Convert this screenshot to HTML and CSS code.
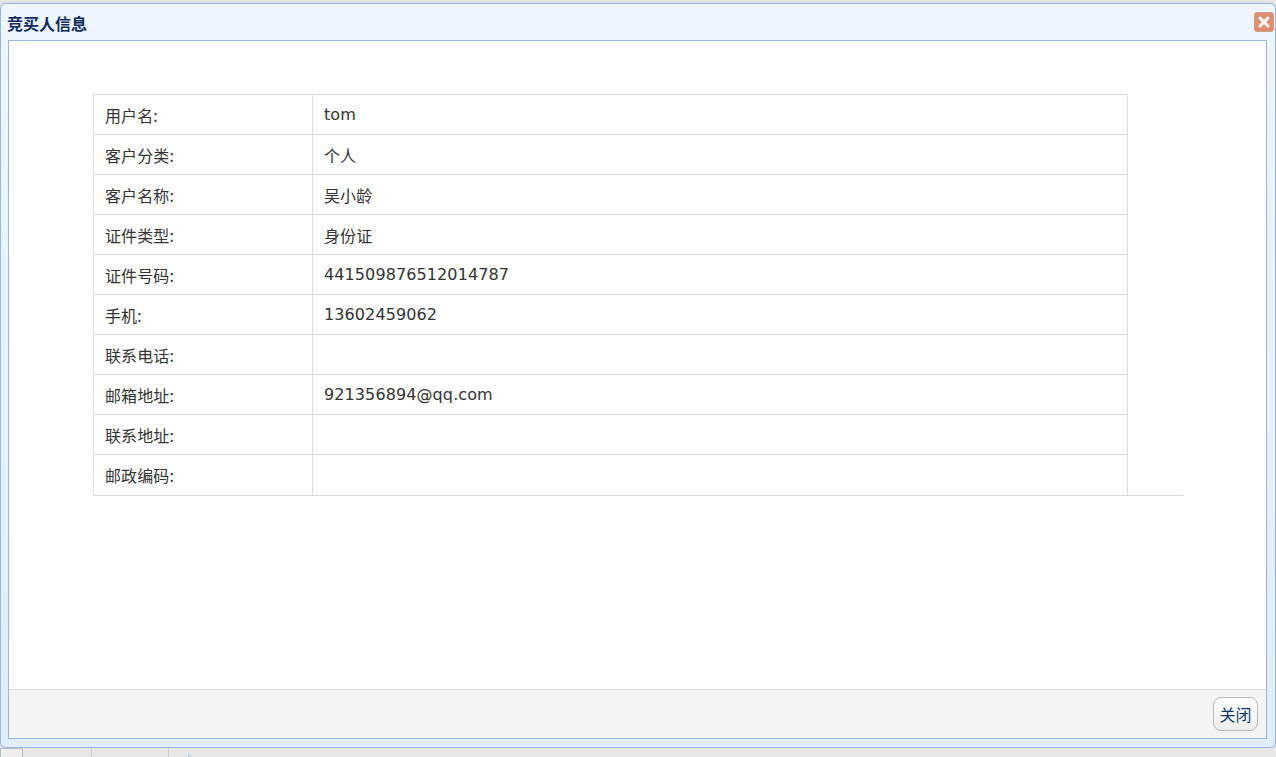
FILE: index.html
```html
<!DOCTYPE html>
<html>
<head>
<meta charset="utf-8">
<title>竞买人信息</title>
<link rel="stylesheet" href="styles.css">
</head>
<body>
<div class="window">
  <div class="window-title">
    <span class="title-text">竞买人信息</span>
    <span class="close-icon">
      <svg width="12" height="12" viewBox="0 0 12 12"><path d="M2 2 L10 10 M10 2 L2 10" stroke="#fff" stroke-width="3" stroke-linecap="round"/></svg>
    </span>
  </div>
  <div class="window-body">
    <div class="content">
      <div class="table-wrap">
        <table class="info">
          <tr><td class="label">用户名:</td><td>tom</td></tr>
          <tr><td class="label">客户分类:</td><td>个人</td></tr>
          <tr><td class="label">客户名称:</td><td>吴小龄</td></tr>
          <tr><td class="label">证件类型:</td><td>身份证</td></tr>
          <tr><td class="label">证件号码:</td><td>441509876512014787</td></tr>
          <tr><td class="label">手机:</td><td>13602459062</td></tr>
          <tr><td class="label">联系电话:</td><td></td></tr>
          <tr><td class="label">邮箱地址:</td><td>921356894@qq.com</td></tr>
          <tr><td class="label">联系地址:</td><td></td></tr>
          <tr><td class="label">邮政编码:</td><td></td></tr>
        </table>
      </div>
    </div>
    <div class="buttons">
      <button class="btn">关闭</button>
    </div>
  </div>
</div>
<div class="under">
  <span class="under-tab first"></span>
  <span class="under-tab"></span>
  <span class="under-tab last"><i class="arrow"></i></span>
</div>
</body>
</html>
```

FILE: styles.css
```css
html, body {
  height: 100%;
}

body {
  margin: 0;
  padding-top: 3px;
  box-sizing: border-box;
  overflow: hidden;
  background: #e6e6e6;
  font-family: "DejaVu Sans", "Noto Sans CJK SC", sans-serif;
  font-size: 16px;
  color: #333;
  display: flex;
  flex-direction: column;
}

.window {
  height: 745px;
  margin-right: 0;
  box-sizing: border-box;
  padding: 0 8px 8px 7px;
  border: 1px solid #95b8e7;
  border-radius: 6px;
  background: linear-gradient(to bottom, #eff5ff 0, #e0ecff 100%);
  display: flex;
  flex-direction: column;
  box-shadow: 0 0 2px #bbb;
}

.window-title {
  height: 36px;
  flex: none;
  display: flex;
  align-items: center;
  justify-content: space-between;
  margin-left: -1px;
  margin-right: -7px;
}

.title-text {
  font-family: "Noto Sans CJK SC", sans-serif;
  font-size: 16px;
  font-weight: bold;
  color: #0e2d5f;
  position: relative;
  top: 1px;
}

.close-icon {
  width: 20px;
  height: 20px;
  margin-top: 0;
  border-radius: 3px;
  background: #e08d6f;
  border: 1px solid #cf9c88;
  box-sizing: border-box;
  display: flex;
  align-items: center;
  justify-content: center;
}

.window-body {
  flex: 1;
  display: flex;
  flex-direction: column;
  border: 1px solid #95b8e7;
  background: #fff;
}

.content {
  flex: 1;
  padding: 53px 0 0 84px;
}

.table-wrap {
  width: 1090px;
  border-bottom: 1px solid #ddd;
}

.info {
  width: 1035px;
  border-collapse: collapse;
  table-layout: fixed;
}

.info td {
  height: 40px;
  box-sizing: border-box;
  padding: 0 11px;
  border: 1px solid #ddd;
  letter-spacing: 0.1px;
}

.info tr:last-child td {
  border-bottom: 0;
}

.info .label {
  width: 219px;
  font-family: "Noto Sans CJK SC", sans-serif;
}

.buttons {
  height: 49px;
  box-sizing: border-box;
  flex: none;
  border-top: 1px solid #ddd;
  background: #f4f4f4;
  display: flex;
  align-items: center;
  justify-content: flex-end;
  padding: 0 8px 0 0;
}

.btn {
  width: 45px;
  height: 34px;
  padding: 0;
  border: 1px solid #bbb;
  border-radius: 8px;
  background: linear-gradient(to bottom, #fff 0, #eee 100%);
  color: #0e3a6e;
  font-family: "Noto Sans CJK SC", sans-serif;
  font-size: 16px;
}

.under {
  flex: 1;
  display: flex;
  background: #e6e6e6;
}

.under-tab {
  width: 76px;
  border-right: 1px solid #ccc;
  position: relative;
}

.under-tab.first {
  width: 91px;
  position: relative;
}

.under-tab.first::before {
  content: "";
  position: absolute;
  left: 0;
  top: 0;
  width: 23px;
  height: 10px;
  box-sizing: border-box;
  border: 1px solid #b4bfcc;
  background: #eee;
}

.under-tab.last {
  border: 0;
}

.arrow {
  position: absolute;
  left: 19px;
  top: 6px;
  border-left: 4px solid #b9cbd8;
  border-top: 3px solid transparent;
  border-bottom: 3px solid transparent;
}
```
